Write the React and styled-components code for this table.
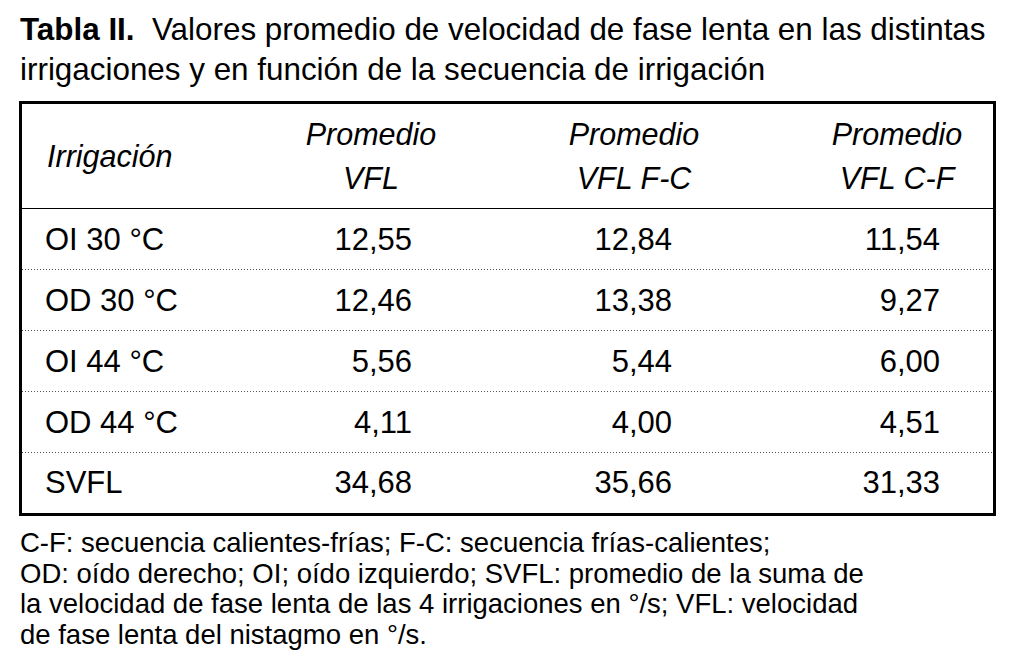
import React from 'react';
import styled, { createGlobalStyle } from 'styled-components';

const GlobalStyle = createGlobalStyle`
    html, body {
        margin: 0;
        padding: 0;
        background: #FFFFFF;
    }
    body {
        font-family: "Liberation Sans", Arial, Helvetica, sans-serif;
        color: #000000;
    }
`;

const Page = styled.div`
    width: 1016px;
    height: 656px;
    padding: 10px 0 0 19px;
    box-sizing: border-box;
    overflow: hidden;
`;

const Caption = styled.div`
    font-size: 31.4px;
    line-height: 40px;
    padding-left: 1px;
    margin-bottom: 11px;

    b {
        font-weight: bold;
    }
`;

const Table = styled.div`
    width: 977px;
    box-sizing: border-box;
    border: 3px solid #000000;
`;

const Grid = styled.div`
    display: grid;
    grid-template-columns: 179px 186px 186px 186px;
    column-gap: 77px;
    align-items: center;
    height: ${(p) => p.$height}px;
    box-sizing: border-box;
    ${(p) => p.$line === 'solid' && 'border-bottom: 1px solid #000000;'}
    ${(p) =>
        p.$line === 'dotted' &&
        `background: linear-gradient(to right, #555555 1px, transparent 1px) repeat-x left bottom / 3px 1px;`}
`;

const HeadCell = styled.div`
    font-style: italic;
    font-size: 30.5px;
    line-height: 44px;
    white-space: nowrap;
    text-align: ${(p) => (p.$first ? 'left' : 'center')};
    padding-left: ${(p) => (p.$first ? '25px' : '0')};
`;

const Cell = styled.div`
    font-size: 31px;
    line-height: 34px;
    white-space: nowrap;
    text-align: ${(p) => (p.$first ? 'left' : 'right')};
    padding-left: ${(p) => (p.$first ? '23px' : '0')};
    padding-right: ${(p) => p.$pad || 0}px;
`;

const Notes = styled.div`
    font-size: 27.5px;
    line-height: 30.5px;
    padding-left: 1px;
    margin-top: 12px;
`;

const rows = [
    ['OI 30 °C', '12,55', '12,84', '11,54'],
    ['OD 30 °C', '12,46', '13,38', '9,27'],
    ['OI 44 °C', '5,56', '5,44', '6,00'],
    ['OD 44 °C', '4,11', '4,00', '4,51'],
    ['SVFL', '34,68', '35,66', '31,33'],
];

// right padding of the number columns
const pads = [52, 55, 50];

const App = () => {
    return (
        <Page>
            <GlobalStyle />
            <Caption>
                <b>Tabla II.</b>&nbsp; Valores promedio de velocidad de fase lenta en las distintas
                <br />
                irrigaciones y en función de la secuencia de irrigación
            </Caption>
            <Table>
                <Grid $height={105} $line='solid'>
                    <HeadCell $first>Irrigación</HeadCell>
                    <HeadCell>Promedio<br />VFL</HeadCell>
                    <HeadCell>Promedio<br />VFL F-C</HeadCell>
                    <HeadCell>Promedio<br />VFL C-F</HeadCell>
                </Grid>
                {rows.map((r, i) => (
                    <Grid key={r[0]} $height={i === rows.length - 1 ? 60 : 61} $line={i === rows.length - 1 ? 'none' : 'dotted'}>
                        <Cell $first>{r[0]}</Cell>
                        <Cell $pad={pads[0]}>{r[1]}</Cell>
                        <Cell $pad={pads[1]}>{r[2]}</Cell>
                        <Cell $pad={pads[2]}>{r[3]}</Cell>
                    </Grid>
                ))}
            </Table>
            <Notes>
                C-F: secuencia calientes-frías; F-C: secuencia frías-calientes;
                <br />
                OD: oído derecho; OI; oído izquierdo; SVFL: promedio de la suma de
                <br />
                la velocidad de fase lenta de las 4 irrigaciones en °/s; VFL: velocidad
                <br />
                de fase lenta del nistagmo en °/s.
            </Notes>
        </Page>
    );
};

export default App;
